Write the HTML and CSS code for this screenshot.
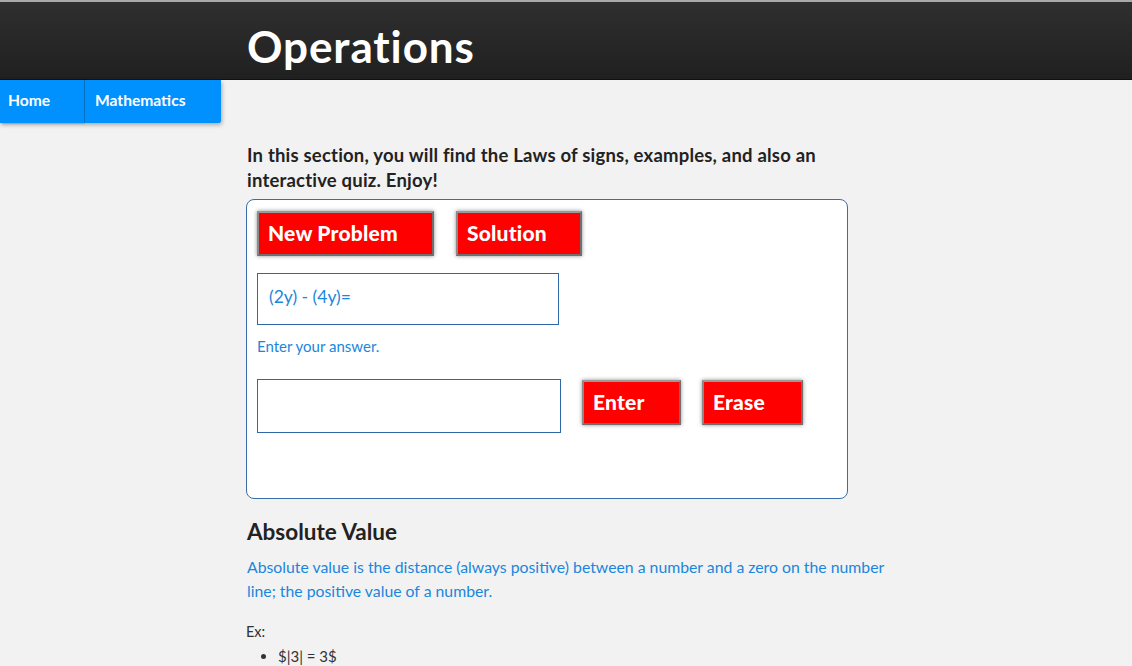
FILE: index.html
```html
<!DOCTYPE html>
<html>
<head>
<meta charset="utf-8">
<link rel="stylesheet" href="styles.css">
</head>
<body>
<header class="topbar">
  <h1 class="title">Operations</h1>
</header>
<nav class="menu">
  <a class="menu-item home">Home</a>
  <a class="menu-item math">Mathematics</a>
</nav>
<main class="content">
  <p class="intro">In this section, you will find the Laws of signs, examples, and also an interactive quiz. Enjoy!</p>
  <section class="quiz">
    <div class="row top-row">
      <button class="btn btn-new">New Problem</button>
      <button class="btn btn-sol">Solution</button>
    </div>
    <div class="problem">(2y) - (4y)=</div>
    <p class="hint">Enter your answer.</p>
    <div class="row answer-row">
      <input class="answer" type="text">
      <button class="btn btn-enter">Enter</button>
      <button class="btn btn-erase">Erase</button>
    </div>
  </section>
  <h2 class="heading">Absolute Value</h2>
  <p class="desc">Absolute value is the distance (always positive) between a number and a zero on the number line; the positive value of a number.</p>
  <p class="ex">Ex:</p>
  <ul class="ex-list">
    <li>$|3| = 3$</li>
  </ul>
</main>
</body>
</html>
```
FILE: styles.css
```css
html, body {
  margin: 0;
  padding: 0;
}
body {
  background: #f2f2f2;
  font-family: Lato, "Open Sans", sans-serif;
  color: #222;
  border-top: 2px solid #a9a9a9;
}
.topbar {
  height: 77px;
  background: linear-gradient(#2f2f2f, #202020);
  border-bottom: 1px solid #111;
  box-sizing: content-box;
  padding-left: 247px;
  display: flex;
  align-items: flex-end;
}
.title {
  margin: 0 0 11px 0;
  color: #fff;
  font-size: 44px;
  font-weight: 700;
  letter-spacing: 0.9px;
  line-height: 1;
}
.menu {
  display: flex;
  width: 221px;
  height: 43px;
  box-shadow: 1px 2px 4px rgba(0,0,0,0.3);
  border-radius: 0 0 3px 0;
  background: #0091ff;
}
.menu-item {
  display: flex;
  align-items: center;
  color: #fff;
  font-weight: 700;
  font-size: 15.6px;
  padding-left: 8px;
  padding-bottom: 4px;
  background: #0091ff;
  box-sizing: border-box;
}
.home {
  width: 84px;
  box-shadow: 1px 0 2px rgba(0,0,0,0.35);
}
.math {
  flex: 1;
  padding-left: 10px;
  margin-left: 1px;
  border-radius: 0 0 3px 0;
}
.content {
  padding-left: 246px;
  width: 660px;
}
.intro {
  margin: 20px 0 6px 1px;
  font-size: 18.5px;
  letter-spacing: 0.2px;
  font-weight: 700;
  line-height: 25px;
  color: #222;
  width: 590px;
}
.quiz {
  width: 602px;
  height: 300px;
  background: #fff;
  border: 1px solid #3a6ea8;
  border-radius: 8px;
  padding: 11px 0 0 10px;
  box-sizing: border-box;
}
.row {
  display: flex;
  align-items: flex-start;
}
.btn {
  background: #ff0000;
  color: #fff;
  font-family: Lato, sans-serif;
  font-weight: 900;
  font-size: 21px;
  letter-spacing: 0.2px;
  text-align: left;
  border: 2px solid #6f6f6f;
  border-top-color: #9a9a9a;
  border-left-color: #8a8a8a;
  box-shadow: 0 0 4px rgba(0,0,0,0.45);
  padding: 0 0 2px 9px;
  height: 45px;
  margin: 0;
}
.btn-new { width: 177px; }
.btn-sol { width: 126px; margin-left: 22px; }
.problem {
  margin-top: 17px;
  width: 302px;
  height: 52px;
  border: 1px solid #2f68a8;
  box-sizing: border-box;
  color: #1a86dd;
  font-size: 17.5px;
  padding: 12px 0 0 11px;
}
.hint {
  margin: 12px 0 0 0;
  color: #1a86dd;
  font-size: 15px;
  line-height: 18px;
}
.answer-row {
  margin-top: 24px;
}
.answer {
  width: 304px;
  height: 54px;
  border: 1px solid #2f68a8;
  box-sizing: border-box;
  margin: 0;
  background: #fff;
}
.btn-enter {
  width: 99px;
  margin-left: 21px;
  margin-top: 1px;
}
.btn-erase {
  width: 101px;
  margin-left: 21px;
  margin-top: 1px;
}
.heading {
  margin: 19px 0 0 1px;
  font-size: 22.5px;
  font-weight: 700;
  color: #222;
  line-height: 28px;
}
.desc {
  margin: 9px 0 0 1px;
  color: #1a86dd;
  font-size: 15.8px;
  line-height: 24px;
}
.ex {
  margin: 18px 0 0 0;
  font-size: 14.5px;
  color: #333;
  line-height: 22px;
}
.ex-list {
  margin: 2px 0 0 0;
  padding-left: 32px;
  font-size: 15px;
  color: #333;
  line-height: 22px;
}
```
